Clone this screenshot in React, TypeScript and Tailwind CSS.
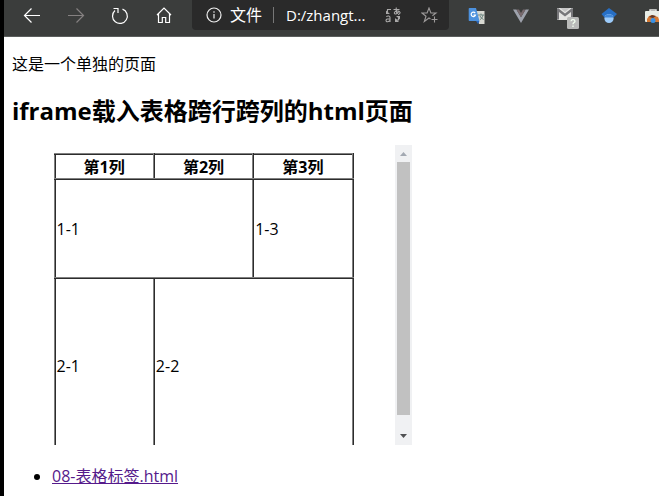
import type { ReactNode } from "react";

function ToolButton({ label, children, className = "" }: { label: string; children: ReactNode; className?: string }) {
  return (
    <button type="button" aria-label={label} className={`flex h-8 w-11 shrink-0 items-center justify-center ${className}`}>
      {children}
    </button>
  );
}

function ArrowIcon({ className = "" }: { className?: string }) {
  return (
    <svg width="18" height="18" viewBox="0 0 18 18" fill="none" stroke="currentColor" strokeWidth="1.2" className={className}>
      <path d="M17 8.500H2M8.500 1.500l-7 7 7 7" />
    </svg>
  );
}

function ReloadIcon() {
  return (
    <svg width="18" height="18" viewBox="0 0 18 18" fill="none" stroke="currentColor" strokeWidth="1.2">
      <path d="M11.5 2.1A7.4 7.4 0 1 1 4 3.5M2.5 1.5H7V6" />
    </svg>
  );
}

function HomeIcon() {
  return (
    <svg width="16" height="18" viewBox="0 0 16 18" fill="none" stroke="currentColor" strokeWidth="1.2">
      <path d="M1 8L8 1l7 7M2.500 6.800v8.700h3.800v-5h3.400v5h3.800V6.800" />
    </svg>
  );
}

function InfoIcon() {
  return (
    <svg width="16" height="16" viewBox="0 0 16 16" fill="none" stroke="#eee" strokeWidth="1.2" className="shrink-0">
      <circle cx="8" cy="8" r="7" />
      <path d="M8 7v4.5M8 4.3v1.4" />
    </svg>
  );
}

function ReadAloudIcon() {
  return (
    <svg width="16" height="16" viewBox="0 0 16 16">
      <g fill="none" stroke="#aaa9a9" strokeWidth="1.1">
        <path d="M8.5 2.5h6M11.3.5c-.4 3 0 4.5.8 6.2M14 3.8c-1 2.4-2.8 3.5-4.2 3-1.2-.8.2-3 2.500-2.800 3-.2 4 2.500.8 3.700" />
        <path d="M1.300 9.600c1.700-1.200 3.700-.7 3.700 1V15M5 11.700c-2.300 0-4 .4-4 1.800 0 1.800 3 1.600 4-.2" />
        <path d="M6 2.500H2.500V5M13.500 10.500V13H11" />
      </g>
      <path d="M1 3.500L5 7H1zM15 12.500L11 9h4zM10 15v-4l4 4z" fill="#aaa9a9" />
    </svg>
  );
}

function StarIcon() {
  return (
    <svg width="17" height="16" viewBox="0 0 17 16" fill="none" stroke="#9c9999" strokeWidth="1.1">
      <path d="M9.5 12L8 11l-4.7 3.5L5 9.2.9 6h5.2L8 1l1.9 5H15l-3.6 2.8M13.5 9.5v6M10.5 12.5h6" />
    </svg>
  );
}

function TranslateIcon() {
  return (
    <svg width="18" height="17" viewBox="0 0 18 17">
      <path d="M8 3h8.5v13H11z" fill="#d8d9d2" />
      <path d="M10 7h6M13 5.5V7M15 7c-.6 2.8-2 4-3 4.8M12 8c.7 1.6 2 2.8 3.5 3.5" stroke="#6c8580" fill="none" />
      <path d="M1.500 0H8l3.500 13H1.500A.8.8 0 0 1 .7 12.200V.8A.8.8 0 0 1 1.500 0z" fill="#4c91de" />
      <path d="M8 13h3.500L10 16z" fill="#2866bb" />
      <path d="M7.200 5.100A2.200 2.200 0 1 0 7.500 7H5.400" stroke="#fff" strokeWidth="1.200" fill="none" />
    </svg>
  );
}

function VueIcon() {
  return (
    <svg width="16" height="15" viewBox="0 0 16 15">
      <path d="M0 .5h3.400L8 8.300 12.600.5H16L8 14z" fill="#9ea2ac" />
      <path d="M3.400.5H6L8 4 10 .5h2.600L8 8.300z" fill="#77696d" />
    </svg>
  );
}

function MailIcon() {
  return (
    <svg width="22" height="22" viewBox="0 0 22 22">
      <rect x="0" y="1" width="16" height="12" rx="1" fill="#e4e4e2" />
      <path d="M0 2v10.500h2V5l6 4.500L14 5v7.500h2V2l-1-1-7 5.500L1 1z" fill="#77777a" />
      <path d="M3 1h10L8 5z" fill="#c6c6c6" />
      <rect x="10" y="10" width="12" height="12" rx="1.500" fill="#b9bab9" />
      <path d="M14 14.200c.2-2.200 4-2 4 0 0 1.300-2 1.400-2 3M16 18.500V20" stroke="#f2fff0" strokeWidth="1.300" fill="none" />
    </svg>
  );
}

function ScholarIcon() {
  return (
    <svg width="16" height="17" viewBox="0 0 16 17">
      <path d="M8 0l8 6-3 3H3L.5 6z" fill="#276fc5" />
      <circle cx="8" cy="10.500" r="4.600" fill="#9ccbfa" />
      <path d="M3.300 9.500a5 5 0 0 1 9.400 0z" fill="#4187d9" />
    </svg>
  );
}

function ToolboxIcon() {
  return (
    <svg width="16" height="16" viewBox="0 0 16 16">
      <path d="M5 4V2h6v2" stroke="#e8e8e4" strokeWidth="1.500" fill="none" />
      <rect x="0" y="3" width="16" height="11" rx="1" fill="#e9eee7" />
      <path d="M2 14v-3l2-3 3-1 6 2 2 5z" fill="#d57934" />
      <path d="M4 9l3-2 4 1-3 2z" fill="#5c3627" />
      <circle cx="8" cy="12.500" r="2.500" fill="#3992e5" />
    </svg>
  );
}

const cell = "border-2 border-[#808080] px-px pt-px pb-0 [border-style:ridge]";

function FramedTable() {
  return (
    <table className="mx-auto mt-2 h-[300px] w-[300px] table-fixed border-collapse leading-[22px]">
      <thead>
        <tr className="h-[25px]">
          <th className={cell}>第1列</th>
          <th className={cell}>第2列</th>
          <th className={cell}>第3列</th>
        </tr>
      </thead>
      <tbody>
        <tr className="h-[99px]">
          <td colSpan={2} className={cell}>1-1</td>
          <td className={cell}>1-3</td>
        </tr>
        <tr>
          <td className={cell}>2-1</td>
          <td colSpan={2} className={cell}>2-2</td>
        </tr>
      </tbody>
    </table>
  );
}

export default function App() {
  return (
    <div className="min-h-screen overflow-hidden border-l-4 border-black bg-white font-['Open_Sans','Noto_Sans_CJK_SC',sans-serif] text-base leading-[22px] text-black">
      <header className="flex h-[37px] items-start overflow-hidden border-b border-[#5b5e5d] bg-[#3b3d3c] pl-1.5 text-white">
        <ToolButton label="后退"><ArrowIcon /></ToolButton>
        <ToolButton label="前进" className="text-[#858181]"><ArrowIcon className="-scale-x-100" /></ToolButton>
        <ToolButton label="刷新"><ReloadIcon /></ToolButton>
        <ToolButton label="主页"><HomeIcon /></ToolButton>
        <div className="ml-1.5 flex h-[30px] w-[257px] shrink-0 items-center rounded-b bg-[#2a2a2a] pl-3.5">
          <InfoIcon />
          <label htmlFor="address" className="ml-2 shrink-0">文件</label>
          <span className="mr-3 ml-[11px] h-4 w-px shrink-0 bg-[#777]" />
          <input id="address" readOnly value="D:/zhangt..." className="w-[91px] bg-transparent text-[15px] outline-none" />
          <button type="button" aria-label="翻译" className="ml-2 shrink-0"><ReadAloudIcon /></button>
          <button type="button" aria-label="收藏" className="ml-5 shrink-0"><StarIcon /></button>
        </div>
        <div className="flex shrink-0 pl-1.5">
          <ToolButton label="谷歌翻译"><TranslateIcon /></ToolButton>
          <ToolButton label="Vue"><VueIcon /></ToolButton>
          <ToolButton label="邮件" className="pt-1 pl-1.5"><MailIcon /></ToolButton>
          <ToolButton label="学术搜索"><ScholarIcon /></ToolButton>
          <ToolButton label="工具箱"><ToolboxIcon /></ToolButton>
        </div>
      </header>
      <main className="px-2 pt-4">
        <p>这是一个单独的页面</p>
        <h2 className="mt-5 text-2xl leading-8 font-bold">iframe载入表格跨行跨列的html页面</h2>
        <section className="mt-[18px] flex h-[300px] w-[400px] overflow-hidden">
          <div className="min-w-0 flex-1 overflow-hidden"><FramedTable /></div>
          <div className="flex w-[17px] flex-col items-center bg-[#f0f1f3]">
            <svg width="17" height="17" viewBox="0 0 17 17"><path d="M5 11h7L8.500 7z" fill="#a3a9b2" /></svg>
            <div className="h-[253px] w-[13px] bg-[#c1c1c1]" />
            <svg width="17" height="17" viewBox="0 0 17 17" className="mt-auto"><path d="M5 6h7L8.500 10z" fill="#4f5052" /></svg>
          </div>
        </section>
        <ul className="mt-5 list-disc pl-10">
          <li><a href="#table" className="text-[#551a8b] underline">08-表格标签.html</a></li>
        </ul>
      </main>
    </div>
  );
}
